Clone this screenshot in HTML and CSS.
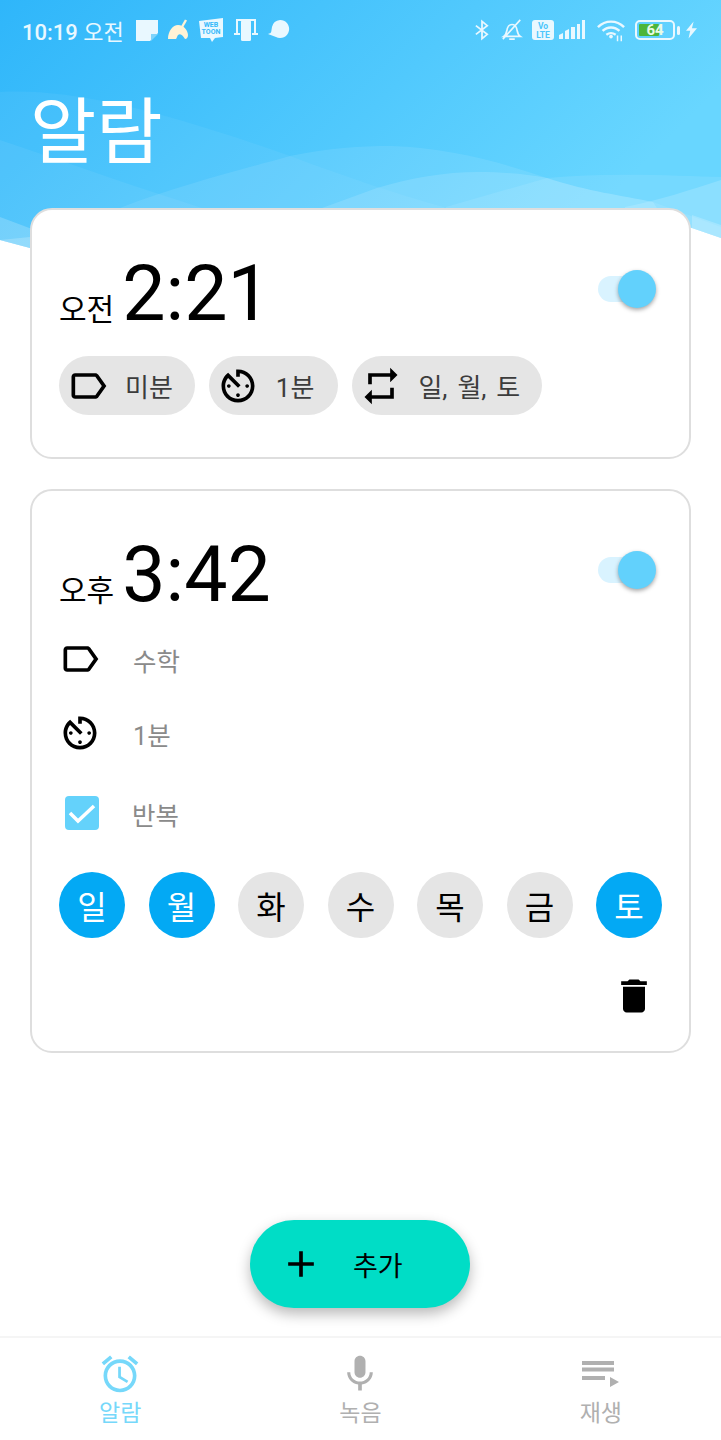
FILE: index.html
```html
<!DOCTYPE html>
<html lang="ko">
  <head>
    <meta charset="utf-8">
    <meta name="viewport" content="width=device-width">
    <title>알람</title>
    <link rel="stylesheet" href="styles.css">
  </head>
  <body>
    <div class="screen">
      <svg class="waves" viewBox="0 0 721 250">
        <defs>
          <linearGradient id="sky" x1="0" y1="0" x2="1" y2="0.35">
            <stop offset="0" stop-color="#2fb6fa"/>
            <stop offset="1" stop-color="#68d6ff"/>
          </linearGradient>
          <clipPath id="edge"><path d="M0 0H721V238L692 228L640 215H100L30 248L0 240Z"/></clipPath>
        </defs>
        <g clip-path="url(#edge)" fill="#fff">
          <rect width="721" height="250" fill="url(#sky)"/>
          <path fill-opacity=".05" d="M0 92C70 88 160 110 290 156C340 175 400 195 444 207L480 260H0Z"/>
          <path fill-opacity=".06" d="M0 140C60 160 110 178 159 194L202 208L220 260H0Z"/>
          <path fill-opacity=".09" d="M120 208C180 185 240 170 290 156C330 148 360 146 391 146C450 148 500 162 547 178C590 192 620 195 653 202L721 227V260H120Z"/>
          <path fill-opacity=".13" d="M322 208L377 188C410 178 445 172 478 172C505 172 525 174 547 178C590 192 620 195 653 202L690 260H322Z"/>
          <path fill-opacity=".09" d="M446 207L547 178C610 172 680 176 721 177V240H446Z"/>
          <path fill-opacity=".16" d="M625 207C660 200 690 190 721 180V240L625 260Z"/>
          <path fill-opacity=".2" d="M692 215L721 225V240H692Z"/>
          <path fill-opacity=".2" d="M0 217L40 232V250H0Z"/>
          <path fill-opacity=".2" d="M0 240L30 237L40 250H0Z"/>
        </g>
      </svg>

      <div class="status">
        <span class="clock"><b>10:19</b> 오전</span>
        <div class="status-apps">
          <svg width="22" height="22" viewBox="0 0 22 22"><path fill="#e9f8ff" d="M0 1h22v13l-8 8H0z"/><path fill="#7fd4fb" d="M15 15h7l-7 7z"/></svg>
          <svg width="20" height="22" viewBox="0 0 20 22"><path fill="#fff3d6" d="M0 20C0 12 5 6 10 6c6 0 10 6 10 10 0 2-1 4-3 4-2-3-4-6-7-4-1 1-1 3-2 4z"/><path stroke="#fff3d6" stroke-width="2.4" d="M14 8l4-7"/></svg>
          <svg class="toon" width="26" height="26" viewBox="0 0 26 26"><path fill="#e9f8ff" d="M1 4l24-3v19l-8 1-3 4-2-4H3z"/><text x="13" y="10" text-anchor="middle">WEB</text><text x="13" y="17" text-anchor="middle">TOON</text></svg>
          <svg width="24" height="24" viewBox="0 0 24 24"><path fill="none" stroke="#e9f8ff" stroke-width="2" d="M3 15V2h18v13"/><path stroke="#e9f8ff" stroke-width="2" d="M0 16h6M18 16h6"/><rect fill="#e9f8ff" x="7" y="2" width="10" height="21" rx="1.5"/></svg>
          <svg width="22" height="20" viewBox="0 0 22 20"><path fill="#e9f8ff" d="M12 0a9 9 0 1 1-4 17L0 14c4-1 3-2 4-7a9 9 0 0 1 8-7z"/></svg>
        </div>
        <div class="status-sys">
          <svg class="sys-bt" width="14" height="24" viewBox="0 0 16 24"><path fill="none" stroke="#e9f8ff" stroke-width="2" d="M1 7l13 10-6 5V2l6 5L1 17"/></svg>
          <svg class="sys-bell" width="22" height="24" viewBox="0 0 24 24"><path fill="none" stroke="#e9f8ff" stroke-width="1.8" d="M3 19c3-2 3-5 4-9 1-3 3-4 5-4s4 1 5 4c1 4 1 7 4 9zM9 22h6M2 22L21 1"/></svg>
          <svg class="sys-volte" width="22" height="20" viewBox="0 0 22 20"><rect width="22" height="20" rx="3" fill="#e9f8ff"/><text x="11" y="9" text-anchor="middle">Vo</text><text x="11" y="17.5" text-anchor="middle">LTE</text></svg>
          <svg class="sys-signal" width="27" height="20" viewBox="0 0 27 20"><path fill="#e9f8ff" d="M0 15l4-2v6H0zM6 11l4-2v10H6zM12 7h4v12h-4zM18 4h3v15h-3zM23 0h3v19h-3z"/></svg>
          <svg class="sys-wifi" width="28" height="24" viewBox="0 0 30 24"><path fill="none" stroke="#e9f8ff" stroke-width="2.6" d="M1 9c8-8 20-8 28 0M6 13c5-5 13-5 18 0M10 17c3-2 7-2 10 0"/><circle cx="15" cy="19" r="2" fill="#e9f8ff"/><path stroke="#e9f8ff" stroke-width="1.6" d="M22 18v6M26 18v6"/></svg>
          <div class="battery"><div class="battery-fill"></div><span>64</span></div>
          <i class="battery-cap"></i>
          <svg class="sys-bolt" width="11" height="20" viewBox="0 0 13 20"><path fill="#e9f8ff" d="M9 0L0 11h5l-2 9 10-12H7z"/></svg>
        </div>
      </div>

      <h1 class="title">알람</h1>

      <main class="cards">
        <section class="card">
          <div class="card-head">
            <div class="time"><span class="ampm">오전</span><span class="digits">2:21</span></div>
            <div class="switch"><span class="knob"></span></div>
          </div>
          <div class="chips">
            <div class="chip">
              <svg class="icon" viewBox="0 0 24 24"><path d="M17.63 5.84C17.27 5.33 16.67 5 16 5L5 5.01C3.9 5.01 3 5.9 3 7v10c0 1.1.9 1.99 2 1.99L16 19c.67 0 1.27-.33 1.63-.84L22 12l-4.37-6.16zM16 17H5V7h11l3.55 5L16 17z"/></svg>
              <span>미분</span>
            </div>
            <div class="chip chip-timer">
              <svg class="icon" viewBox="0 0 24 24"><path d="M11 17c0 .55.45 1 1 1s1-.45 1-1-.45-1-1-1-1 .45-1 1zm0-14v4h2V5.08c3.39.49 6 3.39 6 6.92 0 3.87-3.13 7-7 7s-7-3.13-7-7c0-1.68.59-3.22 1.58-4.42L12 13l1.41-1.41-6.8-6.8v.02C4.42 6.45 3 9.05 3 12c0 4.97 4.02 9 9 9 4.97 0 9-4.03 9-9s-4.03-9-9-9h-1zm7 9c0-.55-.45-1-1-1s-1 .45-1 1 .45 1 1 1 1-.45 1-1zM6 12c0 .55.45 1 1 1s1-.45 1-1-.45-1-1-1-1 .45-1 1z"/></svg>
              <span>1분</span>
            </div>
            <div class="chip">
              <svg class="icon" viewBox="0 0 24 24"><path d="M7 7h10v3l4-4-4-4v3H5v6h2V7zm10 10H7v-3l-4 4 4 4v-3h12v-6h-2v4z"/></svg>
              <span class="chip-days">일, 월, 토</span>
            </div>
          </div>
        </section>

        <section class="card">
          <div class="card-head">
            <div class="time"><span class="ampm">오후</span><span class="digits">3:42</span></div>
            <div class="switch"><span class="knob"></span></div>
          </div>
          <div class="option">
            <svg class="icon" viewBox="0 0 24 24"><path d="M17.63 5.84C17.27 5.33 16.67 5 16 5L5 5.01C3.9 5.01 3 5.9 3 7v10c0 1.1.9 1.99 2 1.99L16 19c.67 0 1.27-.33 1.63-.84L22 12l-4.37-6.16zM16 17H5V7h11l3.55 5L16 17z"/></svg>
            <span>수학</span>
          </div>
          <div class="option option-timer">
            <svg class="icon" viewBox="0 0 24 24"><path d="M11 17c0 .55.45 1 1 1s1-.45 1-1-.45-1-1-1-1 .45-1 1zm0-14v4h2V5.08c3.39.49 6 3.39 6 6.92 0 3.87-3.13 7-7 7s-7-3.13-7-7c0-1.68.59-3.22 1.58-4.42L12 13l1.41-1.41-6.8-6.8v.02C4.42 6.45 3 9.05 3 12c0 4.97 4.02 9 9 9 4.97 0 9-4.03 9-9s-4.03-9-9-9h-1zm7 9c0-.55-.45-1-1-1s-1 .45-1 1 .45 1 1 1 1-.45 1-1zM6 12c0 .55.45 1 1 1s1-.45 1-1-.45-1-1-1-1 .45-1 1z"/></svg>
            <span>1분</span>
          </div>
          <div class="option option-repeat">
            <div class="check"><svg viewBox="0 0 34 34"><path fill="none" stroke="#fff" stroke-width="3.500" d="M5 17l8 8 16-15"/></svg></div>
            <span>반복</span>
          </div>
          <div class="days">
            <span class="day on">일</span>
            <span class="day on">월</span>
            <span class="day">화</span>
            <span class="day">수</span>
            <span class="day">목</span>
            <span class="day">금</span>
            <span class="day on">토</span>
          </div>
          <div class="card-foot">
            <svg class="icon" viewBox="0 0 24 24"><path d="M6 19c0 1.1.9 2 2 2h8c1.1 0 2-.9 2-2V7H6v12zM19 4h-3.5l-1-1h-5l-1 1H5v2h14V4z"/></svg>
          </div>
        </section>
      </main>

      <div class="fab-row">
        <button class="fab">
          <svg class="icon" viewBox="0 0 24 24"><path d="M19 13h-6v6h-2v-6H5v-2h6V5h2v6h6v2z"/></svg>
          <span>추가</span>
        </button>
      </div>

      <nav class="tabs">
        <div class="tab active">
          <svg class="tab-icon" viewBox="0 0 24 24"><path d="M22 5.72l-4.6-3.86-1.29 1.53 4.6 3.86L22 5.72zM7.88 3.39L6.6 1.86 2 5.71l1.29 1.53 4.59-3.85zM12.5 8H11v6l4.75 2.85.75-1.23-4-2.37V8zM12 4c-4.97 0-9 4.03-9 9s4.02 9 9 9c4.97 0 9-4.03 9-9s-4.03-9-9-9zm0 16c-3.87 0-7-3.13-7-7s3.13-7 7-7 7 3.13 7 7-3.13 7-7 7z"/></svg>
          <span>알람</span>
        </div>
        <div class="tab">
          <svg class="tab-icon" viewBox="0 0 24 24"><path d="M12 14c1.66 0 2.99-1.34 2.99-3L15 5c0-1.66-1.34-3-3-3S9 3.34 9 5v6c0 1.66 1.34 3 3 3zm5.3-3c0 3-2.54 5.1-5.3 5.1S6.7 14 6.7 11H5c0 3.41 2.72 6.23 6 6.72V21h2v-3.28c3.28-.48 6-3.3 6-6.72h-1.7z"/></svg>
          <span>녹음</span>
        </div>
        <div class="tab">
          <svg class="tab-icon" viewBox="0 0 44 44"><path d="M3 9h32v4H3zM3 15.500h32v4H3zM3 24h23v4H3zM31 25l9 5-9 5z"/></svg>
          <span>재생</span>
        </div>
      </nav>
    </div>
  </body>
</html>
```
FILE: styles.css
```css
* {margin: 0; padding: 0; box-sizing: border-box;}

body {
	background: #fff;
	font-family: Roboto, "Noto Sans CJK KR", sans-serif;
	color: #000;
}
.screen {
	position: relative;
	width: 721px;
	height: 1440px;
	overflow: hidden;
	display: flex;
	flex-direction: column;
}
.waves {
	position: absolute;
	top: 0;
	left: 0;
	width: 721px;
	height: 250px;
}

/* status bar */
.status {
	position: relative;
	height: 62px;
	padding: 0 24px 2px 22px;
	display: flex;
	align-items: center;
	color: #e9f8ff;
	font-size: 22px;
}
.clock b {font-weight: 500;}
.status-apps {
	margin-left: 12px;
	display: flex;
	align-items: center;
	gap: 10px;
}
.status-sys {
	margin-left: auto;
	display: flex;
	align-items: center;
}
.toon text {font: 700 7px Roboto, sans-serif; fill: #35b9fa;}
.sys-volte text {font: 700 8.5px Roboto, sans-serif; fill: #4cc6fc;}
.sys-bell {margin-left: 12px;}
.sys-volte {margin-left: 9px;}
.sys-signal {margin-left: 5px;}
.sys-wifi {margin-left: 11px;}
.battery {
	position: relative;
	width: 40px;
	height: 20px;
	margin-left: 10px;
	border: 2px solid #e9f8ff;
	border-radius: 5px;
	padding: 2px;
	display: flex;
}
.battery-fill {width: 64%; background: #4db53a; border-radius: 1px;}
.battery span {
	position: absolute;
	top: 0;
	left: 0;
	width: 100%;
	text-align: center;
	font-size: 15px;
	line-height: 16px;
	font-weight: 700;
	color: #eafbe4;
}
.battery-cap {
	width: 3px;
	height: 9px;
	margin-left: 2px;
	background: #e9f8ff;
	border-radius: 2px;
}
.sys-bolt {margin-left: 6px;}

.title {
	position: relative;
	height: 146px;
	padding-left: 30px;
	font-size: 72px;
	line-height: 142px;
	font-weight: 400;
	color: #fff;
}

/* cards */
.cards {
	position: relative;
	padding: 0 30px;
	display: flex;
	flex-direction: column;
	gap: 30px;
}
.card {
	background: #fff;
	border: 2px solid #dedede;
	border-radius: 22px;
	padding: 0 27px;
}
.card-head {
	height: 146px;
	padding-top: 42px;
	display: flex;
	justify-content: space-between;
	align-items: flex-start;
}
.time {
	display: flex;
	align-items: baseline;
	gap: 8px;
	height: 84px;
}
.ampm {font-size: 30px;}
.digits {font-size: 77px; line-height: 84px;}

.switch {
	position: relative;
	width: 52px;
	height: 26px;
	margin: 24px 12px 0 0;
	background: #d9f3ff;
	border-radius: 13px;
}
.knob {
	position: absolute;
	top: -6px;
	right: -6px;
	width: 38px;
	height: 38px;
	border-radius: 50%;
	background: #62d1fc;
	box-shadow: 0 2px 4px rgba(0,0,0,.35);
}

.icon {width: 44px; height: 44px; fill: #000; flex: none;}

.chips {
	display: flex;
	gap: 14px;
	padding: 0 0 42px;
}
.chip {
	height: 59px;
	padding: 0 22px 0 7px;
	background: #e5e5e5;
	border-radius: 30px;
	display: flex;
	align-items: center;
	gap: 15px;
	font-size: 26px;
	color: #3c3c3c;
}
.chip-timer {padding-right: 24px; gap: 16px;}
.chip-days {word-spacing: 3.5px;}

.option {
	height: 44px;
	display: flex;
	align-items: center;
	gap: 32px;
	font-size: 25.500px;
	color: #8a8a8a;
}
.option .icon {margin-left: -1px; margin-right: -1px;}
.option-timer {margin-top: 30px;}
.option-repeat {margin-top: 36px;}
.check {
	width: 34px;
	height: 34px;
	margin: 0 1px 0 6px;
	background: #64d2fb;
	border-radius: 4px;
}
.check svg {display: block;}

.days {
	display: flex;
	justify-content: space-between;
	margin-top: 37px;
}
.day {
	width: 66px;
	height: 66px;
	border-radius: 50%;
	background: #e5e5e5;
	display: flex;
	align-items: center;
	justify-content: center;
	font-size: 32px;
}
.day.on {background: #03a9f4; color: #fff;}
.card-foot {
	height: 113px;
	padding: 36px 6px 0 0;
	display: flex;
	justify-content: flex-end;
}

/* add button */
.fab-row {
	margin-top: auto;
	padding: 0 1px 28px 0;
	display: flex;
	justify-content: center;
	position: relative;
}
.fab {
	width: 220px;
	height: 88px;
	border: none;
	border-radius: 44px;
	background: #00ddc6;
	box-shadow: 0 6px 14px rgba(0,0,0,.28);
	display: flex;
	align-items: center;
	padding-left: 29px;
	gap: 30px;
	font: 400 27px Roboto, "Noto Sans CJK KR", sans-serif;
	color: #000;
}

/* bottom tabs */
.tabs {
	height: 104px;
	border-top: 2px solid #f5f5f5;
	display: flex;
	color: #b0b0b0;
	background: #fff;
	position: relative;
}
.tab {
	flex: 1;
	display: flex;
	flex-direction: column;
	align-items: center;
	padding-top: 14px;
	font-size: 23px;
	line-height: 30px;
}
.tab-icon {width: 44px; height: 44px; fill: #b0b0b0; margin-bottom: 3px;}
.tab.active {color: #76d8fa;}
.tab.active .tab-icon {fill: #76d8fa;}
```
